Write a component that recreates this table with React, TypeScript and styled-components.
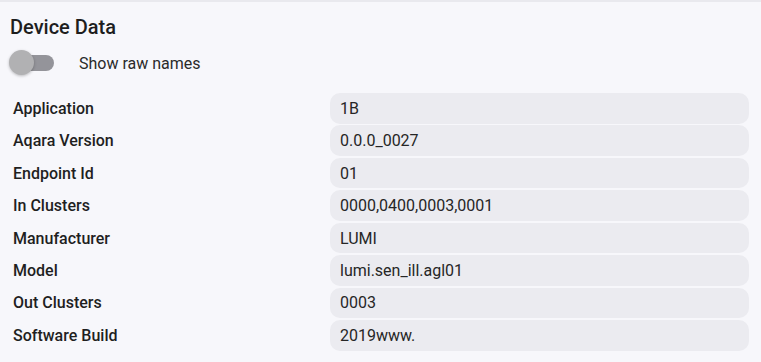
import React from "react";
import styled, { createGlobalStyle } from "styled-components";

const Global = createGlobalStyle`
  html, body { margin: 0; padding: 0; background: #f7f7fb; }
  body { font-family: Roboto, "Noto Sans", Arial, sans-serif; color: #212121; }
`;

const Page = styled.div`
  border-top: 2px solid #e9e9ee;
  padding: 11px 12px 0 10px;
  box-sizing: border-box;
  height: 362px;
`;

const Title = styled.h2`
  margin: 0;
  font-size: 20px;
  font-weight: 500;
  line-height: 28px;
  color: #1e1e1e;
`;

const ToggleRow = styled.label`
  display: flex;
  align-items: center;
  height: 26px;
  margin-top: 9px;
  gap: 25px;
`;

const Track = styled.span`
  position: relative;
  display: inline-block;
  width: 42px;
  height: 16px;
  margin-left: 2px;
  border-radius: 8px;
  background: #94949a;
`;

const Thumb = styled.span`
  position: absolute;
  left: -3px;
  top: -5px;
  width: 25px;
  height: 25px;
  border-radius: 50%;
  background: #b1b1b3;
  box-shadow: 0 1px 3px rgba(0, 0, 0, 0.25);
`;

const ToggleText = styled.span`
  font-size: 16px;
  color: #2a2a2a;
`;

const Table = styled.div`
  display: grid;
  grid-template-columns: 320px 419px;
  row-gap: 1.85px;
  margin-top: 17px;
`;

const Label = styled.div`
  display: flex;
  align-items: center;
  height: 30.6px;
  padding-left: 3px;
  font-size: 16px;
  font-weight: 500;
  color: #1f1f1f;
`;

const Value = styled.div`
  display: flex;
  align-items: center;
  height: 30.6px;
  padding-left: 10px;
  border-radius: 10px;
  background: #ebebf0;
  font-size: 16px;
  color: #262626;
`;

const rows: [string, string][] = [
  ["Application", "1B"],
  ["Aqara Version", "0.0.0_0027"],
  ["Endpoint Id", "01"],
  ["In Clusters", "0000,0400,0003,0001"],
  ["Manufacturer", "LUMI"],
  ["Model", "lumi.sen_ill.agl01"],
  ["Out Clusters", "0003"],
  ["Software Build", "2019www."],
];

export default function App() {
  return (
    <>
      <Global />
      <Page>
        <Title>Device Data</Title>
        <ToggleRow>
          <Track>
            <Thumb />
          </Track>
          <ToggleText>Show raw names</ToggleText>
        </ToggleRow>
        <Table>
          {rows.map(([k, v]) => (
            <React.Fragment key={k}>
              <Label>{k}</Label>
              <Value>{v}</Value>
            </React.Fragment>
          ))}
        </Table>
      </Page>
    </>
  );
}
